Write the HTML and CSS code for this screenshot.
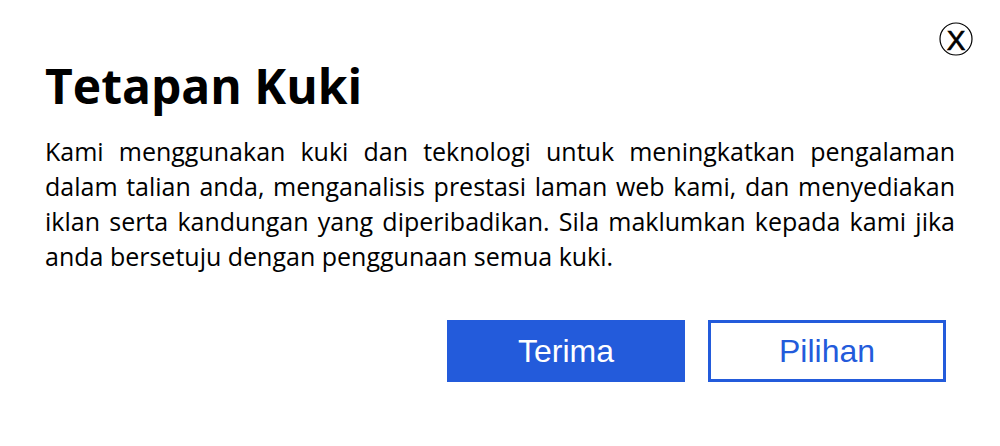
FILE: index.html
```html
<!DOCTYPE html>
<html lang="ms">
<head>
<meta charset="utf-8">
<link rel="stylesheet" href="styles.css">
</head>
<body>
<div class="dialog">
  <div class="close-row">
    <button class="close" aria-label="Tutup">
      <svg width="34" height="34" viewBox="0 0 34 34"><circle cx="17" cy="17" r="16" fill="none" stroke="#000" stroke-width="1.2"/><text x="17" y="27.5" text-anchor="middle" class="close-x">X</text></svg>
    </button>
  </div>
  <h1 class="title">Tetapan Kuki</h1>
  <p class="text">Kami menggunakan kuki dan teknologi untuk meningkatkan pengalaman dalam talian anda, menganalisis prestasi laman web kami, dan menyediakan iklan serta kandungan yang diperibadikan. Sila maklumkan kepada kami jika anda bersetuju dengan penggunaan semua kuki.</p>
  <div class="actions">
    <button class="btn btn-primary">Terima</button>
    <button class="btn btn-outline">Pilihan</button>
  </div>
</div>
</body>
</html>
```
FILE: styles.css
```css
html, body { margin: 0; padding: 0; background: #fff; }
.dialog { width: 1000px; height: 446px; box-sizing: border-box; padding: 22px 45px 0 45px; font-family: "Open Sans", sans-serif; color: #000; }
.close-row { display: flex; justify-content: flex-end; margin-right: -18px; height: 34px; }
.close { background: none; border: 0; padding: 0; width: 34px; height: 34px; cursor: pointer; }
.close-x { font-family: "Liberation Sans", sans-serif; font-size: 28px; font-weight: 400; fill: #000; stroke: #000; stroke-width: 0.7px; }
.title { margin: 0; font-size: 48px; font-weight: 700; line-height: 60px; }
.text { margin: 18px 0 0 0; font-size: 25px; line-height: 35px; text-align: justify; }
.actions { display: flex; justify-content: flex-end; gap: 23px; margin-top: 46px; margin-right: 9px; }
.btn { width: 238px; height: 62px; font-family: "Liberation Sans", sans-serif; font-size: 32px; box-sizing: border-box; cursor: pointer; padding: 0; }
.btn-primary { background: #235bdb; color: #fff; border: 0; }
.btn-outline { background: #fff; color: #235bdb; border: 3px solid #235bdb; }
```
